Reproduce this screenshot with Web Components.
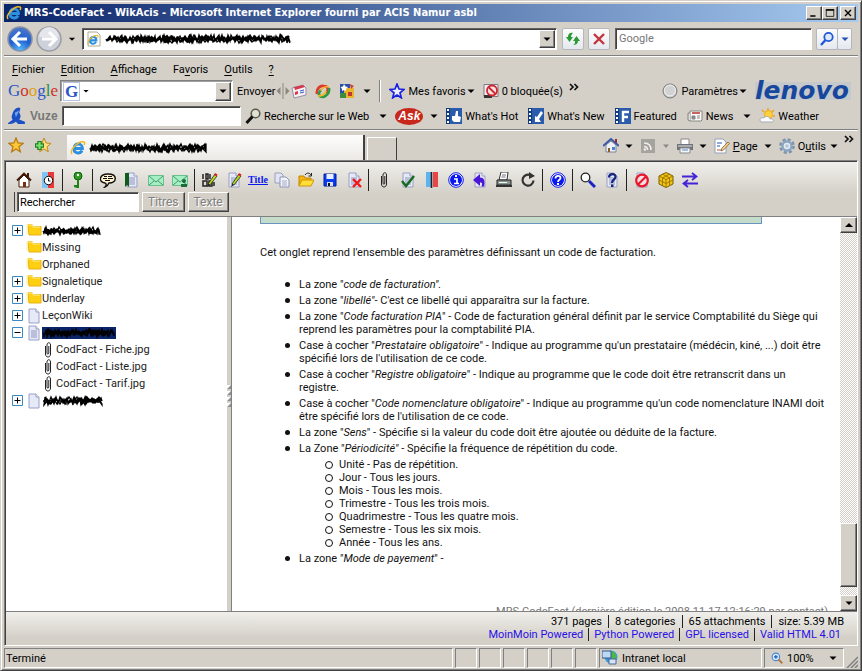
<!DOCTYPE html>
<html lang="fr">
<head>
<meta charset="utf-8">
<title>MRS-CodeFact - WikAcis</title>
<style>
html, body { height: 100%; }
body {
  margin: 0; overflow: hidden; background: #d4d0c8; color: #000;
  font: 11px/13px Roboto, "Noto Sans", sans-serif;
  --face: #d4d0c8; --link: #2a10e8;
}
</style>
</head>
<body>
<browser-window></browser-window>
<script>
const define = (name, css, html) => customElements.define(name, class extends HTMLElement {
  constructor() {
    super();
    this.attachShadow({ mode: 'open' }).innerHTML =
      `<style>:host,*{box-sizing:border-box}button{font:inherit;color:inherit;cursor:default}${css}</style>${html}`;
  }
});

const page = '<path d="M3 1h7l3 3v11H3z" fill="#e6e9f8" stroke="#9a9fc4"/><path d="M10 1v3h3" fill="#fff" stroke="#9599bb"/>';
const lines = '<path d="M5 6h6M5 8h6M5 10h6M5 12h6" stroke="#8d95bd"/>';
const pencil = '<path d="M6 12L13 2l2 2-7 9z" fill="#b8dc20" stroke="#222" stroke-width=".8"/><path d="M12 3l1-2 2.500 1.500-1 2z" fill="#e02020"/><path d="M5 15l1-3 2 1z" fill="#222"/>';
const ie = '<path d="M3 8.500h9.500c0-6-8-6-8.500 0-.3 5 6 6 8 2" fill="none" stroke="#2d8fe0" stroke-width="2.800"/><path d="M2 14C-1 10 9 0 14 2c1 .5.800 2 0 3" fill="none" stroke="#f0b826" stroke-width="1.500"/>';
const film = '<path d="M0 0h16v16H0z" fill="#2b5cab"/><path d="M0 0h4v16H0z" fill="#123a80"/><path d="M2 1v14" stroke="#fff" stroke-width="2" stroke-dasharray="2 2"/>';
const mail = '<path d="M.5 3.500h15v10H.5z" fill="#a4f0c4" stroke="#6cc08e"/><path d="M1 4l7 6 7-6M1 13l5-4M15 13l-5-4" fill="none" stroke="#3f8f62" stroke-width=".9"/>';
const star = 'M8 1l2 5 5 .4-4 3.400 1.300 5L8 12l-4.300 2.800 1.300-5-4-3.400L6 6z';
const clip = '<path d="M5.500 4v8c0 4 5 4 5 0V3c0-3-3.500-3-3.500 0v8c0 1.500 1.800 1.500 1.800 0V4" fill="none" stroke="#222"/>';
const ICONS = {
  ie,
  iepage: `<path d="M2 1h9l3 3v11H2z" fill="#fff" stroke="#b0a890"/><g transform="translate(1 3) scale(.75)">${ie}</g>`,
  down: '<path d="M4.500 6.500h7L8 10z" fill="#000"/>',
  downblue: '<path d="M4.500 6.500h7L8 10z" fill="#2050b0"/>',
  downgray: '<path d="M5 6.500h6L8 10z" fill="#8c8a84"/>',
  up: '<path d="M4 10h8L8 6z" fill="#000"/>',
  min: '<path d="M3 11h7v2H3z"/>',
  max: '<path d="M3 3.500h10v9H3z" fill="none" stroke="#000"/><path d="M2.500 3h11v2h-11z"/>',
  close: '<path d="M4 4l8 8M12 4l-8 8" stroke="#000" stroke-width="1.800"/>',
  refresh: '<path d="M1 6l3.500 5L8 6H6c0-2 1-3 2-4-3-1-5 1-5 4z" fill="#2b9a37"/><path d="M8 10l3.500-5L15 10h-2c0 2.500-2 4-5 4 2-1 2-2 2-4z" fill="#2b9a37"/>',
  stop: '<path d="M3 3l10 10M13 3L3 13" stroke="#c4343c" stroke-width="2.400"/>',
  lens: '<circle cx="9.500" cy="6" r="4.200" fill="#dbeafc" stroke="#2258d8" stroke-width="1.800"/><path d="M6.500 9L2 14" stroke="#2258d8" stroke-width="2.400"/>',
  mag: '<circle cx="10.500" cy="5.500" r="4.300" fill="#dfe3d6" stroke="#5c5c48" stroke-width="1.600"/><path d="M7.500 8.500L1.500 15" stroke="#111" stroke-width="3"/>',
  gmail: '<path d="M1 5l11-3 3 3v7L3 15z" fill="#f6f0f4" stroke="#9a8fa8"/><path d="M3 4l9-2 2 2-10 3z" fill="#d33a4a"/><path d="M4 9l3-1v3l-3 1z" fill="#d33a4a"/><path d="M9 8l4-1M9 10l4-1" stroke="#3858c8"/>',
  swirl: '<path d="M2 11c-1-5 3-9 7-8 4 0 5 4 2 7" fill="none" stroke="#dc3a2a" stroke-width="2.600"/><path d="M14 5c1 5-3 9-7 9-4-1-4-4-1-7" fill="none" stroke="#2b9c43" stroke-width="2.600"/><path d="M3 13c4 0 7-2 8-5" fill="none" stroke="#f4b52c" stroke-width="2"/><path d="M14 4c-4-1-7 1-8 4" fill="none" stroke="#f4b52c" stroke-width="1.500"/>',
  gadget: '<path d="M1 1h10v10H1z" fill="#2c50a8"/><path d="M5 5h10v10H5z" fill="#e8b52c"/><path d="M1 10h6v5H1z" fill="#3a8c42"/><path d="M9 9h4v4H9z" fill="#c03830"/><path d="M5 1l1.500 2.500L9 4 7 6v2L5 7 3 8V6L1.500 4 4 3.500z" fill="#fff"/><path d="M11 1l4 2-3 3z" fill="#d43a2c"/>',
  bluestar: `<path d="${star}" fill="#eef" stroke="#1a22e0" stroke-width="1.700"/>`,
  blocked: '<path d="M1 1.500h14v12H1z" fill="#f3eef0" stroke="#7e7884"/><path d="M1 12h8v3H1z" fill="#333"/><circle cx="9" cy="7.500" r="5" fill="#fbe3e3" stroke="#cf2630" stroke-width="1.800"/><path d="M5.500 4l7 7" stroke="#cf2630" stroke-width="1.800"/>',
  ball: '<circle cx="8" cy="8" r="7" fill="#c8c8c8" stroke="#77777a"/><circle cx="8" cy="7.500" r="5.500" fill="#d2d2d2" stroke="#f4f4f4"/>',
  frog: '<path d="M4 6c1-4 5-7 7-5l-1 4c2 3 1 5 0 6l5 2v2H9l-2-2c-2 2-5 2-7 2 0-2 3-2 4-4-1-1-1-3 0-5z" fill="#1d50c4"/><path d="M6 5l4-2-3 6z" fill="#6ea8f2"/>',
  hot: film + '<path d="M6 8l3 0 1-5 2 0v5l3 1-1 5H8L6 12z" fill="#fff"/>',
  newi: film + '<path d="M13 3L9 9l-2-1v6h6l-2-3 4-6z" fill="#fff"/>',
  feat: film + '<path d="M8 14V4h6M8 9h5" fill="none" stroke="#fff" stroke-width="2.400"/>',
  news: '<path d="M3 3h12v9l-1 1H3z" fill="#fafafa" stroke="#86867c"/><path d="M3 5H1v7l2 1" fill="#ddd" stroke="#86867c"/><path d="M5 5h8" stroke="#b53030" stroke-width="1.500"/><path d="M5 8h3v3H5zM10 8h3M10 10h3" fill="#888" stroke="#888"/>',
  sun: '<path d="M9 0v3M3 2l2 2M15 2l-2 2M16 8h-2" stroke="#f0a414" stroke-width="1.500"/><circle cx="9.500" cy="6.500" r="4" fill="#ffd23a" stroke="#eda820"/><path d="M2 14c-3-3 1-5 3-4 2-3 6-1 6 1 4-1 4 3 2 3z" fill="#fafcff" stroke="#a6acb4"/>',
  fav: `<path d="${star}" fill="#ffc637" stroke="#b87c12" stroke-width="1.300"/>`,
  addfav: `<path d="${star}" fill="#ffe07a" stroke="#c08a20" transform="translate(1 0)"/><path d="M0 8.500h9M4.500 4v9" stroke="#1f7f24" stroke-width="4.500"/><path d="M1 8.500h7M4.500 5v7" stroke="#7fe070" stroke-width="2.200"/>`,
  ehome: '<path d="M3 7v7h10V7L8 3z" fill="#eef2f8" stroke="#7c8494"/><path d="M0 8l8-7 8 7" fill="none" stroke="#3c58a8" stroke-width="2"/><path d="M12 1h2v4h-2z" fill="#8c3030"/><path d="M5 10h2v4H5z" fill="#8a5c28"/><path d="M9 9h3v3H9z" fill="#4a84d8"/>',
  rss: '<path d="M1 1h14v14H1z" fill="#a5a39d"/><path d="M4 5c5 0 7 3 7 7M4 8.500c2.500 0 3.500 1.500 3.500 3.500" fill="none" stroke="#eee" stroke-width="1.600"/><circle cx="4.800" cy="11.500" r="1.200" fill="#eee"/>',
  eprint: '<path d="M4 1h8v6H4z" fill="#fff" stroke="#888"/><path d="M0 6h16v6H0z" fill="#70737a"/><path d="M1 7h14v2H1z" fill="#a8abb0"/><path d="M3 10h10v5H3z" fill="#f4f6fa" stroke="#888"/><path d="M5 12h6" stroke="#5a8ac8"/>',
  epage: '<path d="M1 1h8l3 3v11H1z" fill="#fff" stroke="#96a0b4"/><path d="M3 5h5M3 8h3" stroke="#6a90d0" stroke-width="1.300"/><path d="M3 12h4" stroke="#d05040"/><path d="M7 13l1-3 6-6 1.500 1.500L9.500 12z" fill="#f4d088" stroke="#6c5830" stroke-width=".7"/>',
  gear: '<circle cx="8" cy="8" r="6.400" fill="none" stroke="#7f95ac" stroke-width="3" stroke-dasharray="3 2"/><circle cx="8" cy="8" r="4.500" fill="#e4ecf2" stroke="#8aa6c2" stroke-width="2.400"/><circle cx="8" cy="8" r="1.800" fill="#b4c4d4"/>',
  home: '<path d="M3 8v7h10V8L8 3z" fill="#fff" stroke="#421a0a"/><path d="M1 8.500l7-7 7 7" fill="none" stroke="#421a0a" stroke-width="1.800"/><path d="M11 1h2v4h-2z" fill="#421a0a"/><path d="M7 10h3v5H7z" fill="#7a3010"/>',
  clock: '<path d="M2 0h6v16H2z" fill="#7fc4f4"/><path d="M8 0h6v16H8z" fill="#e83838"/><circle cx="8.500" cy="8.500" r="4.200" fill="#fff" stroke="#111"/><path d="M8.500 6v3h2" fill="none" stroke="#111"/>',
  key: '<circle cx="8" cy="4" r="4" fill="#2c9a20" stroke="#12600c"/><circle cx="8" cy="3" r="1.200" fill="#fff"/><path d="M7 8h2v8H7l-3-1v-2h3z" fill="#1c8414"/>',
  bubble: '<path d="M8 2c10 0 9 9 1 9-1 0 0 3-4 4 2-2 1-4 0-4C-2 10-1 2 8 2z" fill="#fff3d0" stroke="#111" stroke-width="1.500"/><path d="M4 4.500h3M8 4.500h4M3 6.500h4M8 6.500h5M5 8.500h5" stroke="#111"/>',
  book: page + lines + '<path d="M1 1h4v14l-2-2-2 2z" fill="#0f5a1c"/>',
  mail, mailuser: mail + '<circle cx="12" cy="9" r="2" fill="#1f6a3c"/><path d="M9 15v-3h6v3z" fill="#1f6a3c"/>',
  editgui: '<path d="M1 2v5M4 2h2v5H4zM8 2v5M1 9h4v5H1zM7 9h3v5H7zM12 10v4" fill="none" stroke="#222" stroke-width="1.500"/>' + pencil,
  edit: page + lines + pencil,
  copy: '<path d="M1 1h6l2 2v8H1z" fill="#e2e5f5" stroke="#999ebd"/><path d="M6 5h6l3 3v7H6z" fill="#f2f3fb" stroke="#8f94b5"/><path d="M8 9h5M8 11h5M8 13h5" stroke="#a5aac8"/>',
  open: '<path d="M1 14V4h5l1 2h6v3" fill="#f5b50c" stroke="#c08404"/><path d="M1 14l3-6h12l-3 6z" fill="#ffdf38" stroke="#d09408"/><path d="M7 3c2-3 5-2 6 0M13.500 1v3h-3" fill="none" stroke="#222"/>',
  disk: '<path d="M2 2h12v12H2z" fill="#0a3cf0" stroke="#031f96"/><path d="M4.500 2h7v5h-7z" fill="#e6f0ff"/><path d="M5 10h6v4H5z" fill="#dcdcec"/><path d="M6 11h2v3H6z" fill="#111"/>',
  del: page + lines + '<path d="M7 7l8 8M15 7l-8 8" stroke="#f01818" stroke-width="2.400"/>',
  clip,
  check: page + lines + '<path d="M2 9l4 5 8-10" fill="none" stroke="#156a1c" stroke-width="2.400"/>',
  diff: '<path d="M2 0h5v15H2z" fill="#5cb4ee"/><path d="M9 0h5v15H9z" fill="#e84646"/><path d="M7.500 0v16" stroke="#222" stroke-width="1.600"/>',
  info: '<circle cx="8" cy="8" r="7.300" fill="#fff" stroke="#0a18e8"/><circle cx="8" cy="8" r="6" fill="#0a18f0"/><path d="M6 7h3v4M6 11.500h5" fill="none" stroke="#fff" stroke-width="1.700"/><path d="M7 3h2v2H7z" fill="#fff"/>',
  back: page + '<path d="M1 8l7-6v3.500c5 0 5 5 4 9h-2.500c1-3 1-4-1.500-4V14z" fill="#4a16d8"/>',
  print: '<path d="M5 0h7l-1 8H3z" fill="#fff" stroke="#333"/><path d="M6 3h4M5.500 5h4" stroke="#777"/><path d="M1 8h14v5H1z" fill="#8c9290" stroke="#222"/><path d="M0 13h16v2H0z" fill="#333"/><path d="M3 10.500h8" stroke="#dfe"/>',
  reload: '<path d="M11 3.500A5.500 5.500 0 1 0 13.500 8.500" fill="none" stroke="#333" stroke-width="2.200"/><path d="M9 0l6 4-6 3z" fill="#333"/>',
  help: '<circle cx="8" cy="8" r="7.300" fill="#fff" stroke="#0a18e8"/><circle cx="8" cy="8" r="6" fill="#0a18f0"/><path d="M5.500 6.500c0-3.500 5-3.500 5-.5 0 2-2.500 1.500-2.500 4" fill="none" stroke="#fff" stroke-width="1.800"/><path d="M7 11h2v2H7z" fill="#fff"/>',
  find: '<circle cx="5.500" cy="5.500" r="4.300" fill="#fff" stroke="#222" stroke-width="1.300"/><path d="M9 9l6 6" stroke="#1a22c8" stroke-width="3"/>',
  pagehelp: page + lines + '<path d="M5 5.500C5 1 12 1 11.500 5 11.500 8 8 7 8 11" fill="none" stroke="#13277c" stroke-width="2.200"/><path d="M7 12.500h2.500V15H7z" fill="#13277c"/>',
  no: page + '<circle cx="8" cy="8.500" r="5.800" fill="#f4dfe6" stroke="#e81828" stroke-width="2.200"/><path d="M12 4.500l-8 8" stroke="#e81828" stroke-width="2.200"/>',
  box: '<path d="M8 .5l7 3.500v8l-7 3.500L1 12V4z" fill="#f2c414" stroke="#7c5c04"/><path d="M1 4l7 3.500L15 4M8 7.500v8M4.500 2l7 4v8M11.500 2l-7 4v8M1 8l7 3.500L15 8" fill="none" stroke="#9a7408" stroke-width=".9"/>',
  swap: '<path d="M0 4.500h14M10 1l4.500 3.500L10 8M16 11.500H2M6 8l-4.500 3.500L6 15" fill="none" stroke="#4422d8" stroke-width="1.800"/>',
  folder: '<path d="M2 1.500h4l1 2h8V12H3z" fill="#ffd012" stroke="#eab010"/><path d="M1 11V2h5l1 2h7" fill="none" stroke="#fff090"/>',
  page, pagelines: page + lines,
  plus: '<path d="M3.500 2.500h10v10h-10z" fill="#fff" stroke="#3a8ac4"/><path d="M5.500 7.500h6M8.500 4.500v6" stroke="#000"/>',
  minus: '<path d="M3.500 2.500h10v10h-10z" fill="#fff" stroke="#3a8ac4"/><path d="M5.500 7.500h6" stroke="#000"/>',
  globe: '<circle cx="9" cy="7" r="6.500" fill="#3a9ad8"/><path d="M8 1c4 0 6 3 7 6l-4 4-2-4z" fill="#4cb848"/><path d="M0 1h9v7H0z" fill="#bcd8f4" stroke="#34568c"/><path d="M7 9h7v5H7z" fill="#d4e4f6" stroke="#486898"/>',
  zoom: '<circle cx="6.500" cy="6.500" r="5" fill="#d4e8fc" stroke="#4a86d0" stroke-width="1.500"/><path d="M4 6.500h5M6.500 4v5" stroke="#1c58b0" stroke-width="1.500"/><path d="M10 10l5 5" stroke="#b07838" stroke-width="2.400"/>',
  more: '<path d="M3 4l3 3-3 3M7.500 4l3 3-3 3" fill="none" stroke="#111" stroke-width="1.700"/>',
  arrows: '<path d="M5.500 4v8L1.500 8zM10.500 4v8l4-4z" fill="#8c8880"/><path d="M8 0v16" stroke="#8c8880"/>'
};
customElements.define('ui-icon', class extends HTMLElement {
  constructor() { super(); this.attachShadow({ mode: 'open' }); }
  connectedCallback() {
    this.shadowRoot.innerHTML = `<style>:host{display:block;flex:none;width:16px;height:16px}svg{display:block;width:100%;height:100%}</style>
      <svg viewBox="0 0 16 16" aria-hidden="true">${ICONS[this.getAttribute('name')] || ''}</svg>`;
  }
});

/* Ink scrawl that hides a name */
customElements.define('ink-scrawl', class extends HTMLElement {
  connectedCallback() {
    const w = +this.getAttribute('length');
    let seed = w * 7919, d = 'M1 6';
    const rnd = () => (seed = (seed * 1103515245 + 12345) % 2147483648) / 2147483648;
    for (let pass = 0; pass < 5; pass++)
      for (let x = 2, k = 0; x < w - 1; x += 1 + Math.round(rnd() * 3), k++)
        d += `L${pass & 1 ? w - x : x} ${(k & 1 ? 2 : 6) + Math.round(rnd() * 4)}`;
    this.attachShadow({ mode: 'open' }).innerHTML =
      `<style>:host{display:block;flex:none}svg{display:block}</style>
       <svg width="${w}" height="12" aria-hidden="true"><path d="${d}" fill="none" stroke="#000" stroke-width="1.300"/></svg>`;
  }
});

define('flat-button', `
  :host{display:block;flex:none}
  button{display:flex;align-items:center;gap:3px;border:0;background:none;padding:0;margin:0;white-space:nowrap}`,
  '<button type="button"><slot></slot></button>');

define('raised-button', `
  :host{display:block;flex:none;width:16px;height:16px}
  button{display:flex;align-items:center;justify-content:center;width:100%;height:100%;padding:0;background:var(--face);
    border:1px solid;border-color:#fff #404040 #404040 #fff;box-shadow:inset -1px -1px #808080;overflow:hidden}`,
  '<button type="button" aria-label="Bouton"><slot></slot></button>');

define('glass-button', `
  :host{display:block;flex:none;height:22px;width:22px}
  button{display:flex;align-items:center;justify-content:center;width:100%;height:100%;padding:0;
    border:1px solid #b4b8be;border-radius:2px;background:linear-gradient(#fdfdfd,#e4e8ee);overflow:hidden}`,
  '<button type="button" aria-label="Bouton"><slot></slot></button>');

define('tool-sep', `
  :host{display:block;flex:none;width:2px;height:22px;border-left:1px solid #808080;border-right:1px solid #fff}`, '');

define('title-bar', `
  :host{display:flex;align-items:center;height:18px;padding:0 2px;gap:2px;color:#fff;
    background:linear-gradient(90deg,#0a246a,#a6caf0);font:bold 11px/18px "DejaVu Sans Condensed","Noto Sans",sans-serif}
  h1{font:inherit;margin:0;flex:1;white-space:nowrap;overflow:hidden}
  .buttons{display:flex}
  raised-button{height:14px}
  raised-button:last-child{margin-left:2px}
  ui-icon{width:12px;height:12px}
  ui-icon.logo{width:16px;height:16px}`,
  `<ui-icon class="logo" name="ie"></ui-icon><h1>MRS-CodeFact - WikAcis - Microsoft Internet Explorer fourni par ACIS Namur asbl</h1>
   <div class="buttons"><raised-button><ui-icon name="min"></ui-icon></raised-button><raised-button><ui-icon name="max"></ui-icon></raised-button><raised-button><ui-icon name="close"></ui-icon></raised-button></div>`);

define('address-bar', `
  :host{display:flex;align-items:center;height:34px;padding:0 6px 0 3px;border-bottom:1px solid #808080;box-shadow:0 1px #fff}
  .travel{display:flex;align-items:center;gap:3px;margin-right:3px}
  .travel ui-icon{width:14px}
  .travel button{border:0;background:none;padding:0;display:block}
  .travel svg{display:block;width:26px;height:26px}
  .field{display:flex;align-items:center;background:#fff;border:1px solid;border-color:#606060 #fff #fff #606060;box-shadow:inset 1px 1px #404040;height:22px;padding:1px 1px 1px 3px}
  .url{flex:1;gap:3px;margin-right:5px}
  .url raised-button{height:18px;margin-left:auto}
  input{width:100%;border:0;outline:0;background:none;font:inherit;padding:0;color:#000}
  input::placeholder{color:#777;opacity:1}
  .search{width:197px;margin:0 4px 0 5px}
  glass-button + glass-button{margin-left:4px}
  glass-button.drop{width:15px;margin-left:-1px}
  glass-button.go{margin-left:0}`,
  `<div class="travel">
     <button type="button" aria-label="Précédent"><svg viewBox="0 0 26 26"><defs><radialGradient id="b" cx=".5" cy="1" r="1"><stop offset="0" stop-color="#5cc0ff"/><stop offset=".5" stop-color="#1f5fd0"/><stop offset="1" stop-color="#4f78c8"/></radialGradient></defs><circle cx="13" cy="13" r="12" fill="url(#b)" stroke="#8890a4" stroke-width="1.500"/><path d="M13 6l-7 7 7 7M7 13h13" fill="none" stroke="#fff" stroke-width="3"/></svg></button>
     <button type="button" aria-label="Suivant"><svg viewBox="0 0 26 26"><circle cx="13" cy="13" r="12" fill="#cdd1da" stroke="#9a9da6" stroke-width="1.500"/><path d="M3 11a10 10 0 0 1 20 0z" fill="#e4e6ec"/><path d="M13 6l7 7-7 7M19 13H6" fill="none" stroke="#fff" stroke-width="3"/></svg></button>
     <ui-icon name="down"></ui-icon>
   </div>
   <div class="field url"><ui-icon name="iepage"></ui-icon><ink-scrawl length="187"></ink-scrawl><raised-button><ui-icon name="down"></ui-icon></raised-button></div>
   <glass-button><ui-icon name="refresh"></ui-icon></glass-button><glass-button><ui-icon name="stop"></ui-icon></glass-button>
   <div class="field search"><input type="text" placeholder="Google" aria-label="Google"></div>
   <glass-button class="go"><ui-icon name="lens"></ui-icon></glass-button><glass-button class="drop"><ui-icon name="downblue"></ui-icon></glass-button>`);

define('menu-bar', `
  :host{display:flex;align-items:center;gap:16px;height:23px;padding:4px 8px 0}
  u{text-underline-offset:2px}`,
  ['<u>F</u>ichier', '<u>E</u>dition', '<u>A</u>ffichage', 'Fa<u>v</u>oris', '<u>O</u>utils', '<u>?</u>']
    .map(t => `<flat-button><span>${t}</span></flat-button>`).join(''));

define('google-bar', `
  :host{display:flex;align-items:center;height:24px;padding:0 7px 0 4px}
  .logo{font:17px/24px "Liberation Serif",serif;width:52px;white-space:nowrap}
  .b{color:#2a56c6}.r{color:#d0302c}.y{color:#e0a010}.n{color:#2a9038}
  .combo{display:flex;align-items:center;width:173px;height:22px;background:#fff;border:1px solid;border-color:#808080 #fff #fff #808080;box-shadow:inset 1px 1px #a0a0a0;padding:1px}
  .g{font:bold 17px/17px "Liberation Serif",serif;color:#2a56c6;border:1px solid #b8c4dc;width:17px;text-align:center;margin-left:1px}
  .combo input{flex:1;min-width:0;border:0;outline:0;background:none}
  .combo raised-button{height:19px}
  .combo > ui-icon{width:12px}
  .icons{display:flex;gap:8px;margin:0 4px 0 0}
  .send{margin-left:4px}
  .end{margin-left:auto}
  .tail{margin:0 4px 0 -3px}
  .more{margin:-6px 0 0 4px}
  .brand{font:italic bold 25px/18px "DejaVu Sans",sans-serif;color:#17479c;background:#c5c9cc;width:96px;height:18px}
  tool-sep{margin:0 8px 0 4px}`,
  `<span class="logo"><span class="b">G</span><span class="r">o</span><span class="y">o</span><span class="b">g</span><span class="n">l</span><span class="r">e</span></span>
   <span class="combo"><span class="g">G</span><ui-icon name="down"></ui-icon><input type="text" aria-label="Recherche Google"><raised-button><ui-icon name="down"></ui-icon></raised-button></span>
   <flat-button class="send">Envoyer</flat-button><ui-icon name="arrows"></ui-icon>
   <span class="icons"><ui-icon name="gmail"></ui-icon><ui-icon name="swirl"></ui-icon><ui-icon name="gadget"></ui-icon></span>
   <ui-icon name="down"></ui-icon><tool-sep></tool-sep>
   <flat-button><ui-icon name="bluestar"></ui-icon><span>Mes favoris</span></flat-button><ui-icon name="down" class="tail"></ui-icon>
   <flat-button><ui-icon name="blocked"></ui-icon><span>0 bloquée(s)</span></flat-button><ui-icon name="more" class="more"></ui-icon>
   <flat-button class="end"><ui-icon name="ball"></ui-icon><span>Paramètres</span></flat-button><ui-icon name="down" class="tail"></ui-icon>
   <span class="brand">lenovo</span>`);

define('vuze-bar', `
  :host{display:flex;align-items:center;height:27px;padding:0 4px;border-bottom:1px solid #808080;box-shadow:0 1px #fff;white-space:nowrap}
  .logo{display:flex;align-items:center;gap:4px;width:54px;font:bold 12px/16px "Liberation Sans",sans-serif;color:#777}
  .logo ui-icon{width:18px;height:18px}
  input{width:179px;height:20px;background:#fff;border:1px solid;border-color:#606060 #fff #fff #606060;box-shadow:inset 1px 1px #404040;outline:0;margin:0 4px 0 0}
  .ask{font:italic bold 12px/16px "Liberation Sans",sans-serif;color:#fff;background:#c8281c;border-radius:50%;width:28px;height:17px;text-align:center;margin:0 3px 0 4px}
  .drop{margin-left:6px}
  .item{margin-left:10px}
  .near{margin-left:4px}`,
  `<span class="logo"><ui-icon name="frog"></ui-icon>Vuze</span><input type="text" aria-label="Recherche Vuze">
   <flat-button><ui-icon name="mag"></ui-icon><span>Recherche sur le Web</span></flat-button><ui-icon class="drop" name="down"></ui-icon>
   <span class="ask">Ask</span><ui-icon name="down"></ui-icon>
   <flat-button class="near"><ui-icon name="hot"></ui-icon><span>What's Hot</span></flat-button>
   <flat-button class="item"><ui-icon name="newi"></ui-icon><span>What's New</span></flat-button>
   <flat-button class="item"><ui-icon name="feat"></ui-icon><span>Featured</span></flat-button>
   <flat-button class="item"><ui-icon name="news"></ui-icon><span>News</span></flat-button><ui-icon class="drop" name="down"></ui-icon>
   <flat-button class="near"><ui-icon name="sun"></ui-icon><span>Weather</span></flat-button>`);

define('tab-strip', `
  :host{display:flex;align-items:flex-end;height:30px;padding:0 0 0 4px}
  .fav{display:flex;gap:11px;align-self:center;width:59px}
  .tab{display:flex;align-items:center;gap:3px;width:298px;height:25px;padding:0 3px;border-right:2px solid #404040;background:linear-gradient(#fdfdfc,#eceae6)}
  .new{width:30px;height:23px;margin-left:2px;border:1px solid #fff;border-width:1px 0 0 1px;border-right:1px solid #404040}
  .cmd{display:flex;align-items:center;margin-left:auto;height:28px}
  .cmd .drop{margin:0 3px 0 2px}
  .more{align-self:flex-start}`,
  `<span class="fav"><ui-icon name="fav"></ui-icon><ui-icon name="addfav"></ui-icon></span>
   <span class="tab"><ui-icon name="ie"></ui-icon><ink-scrawl length="119"></ink-scrawl></span><span class="new"></span>
   <span class="cmd"><ui-icon name="ehome"></ui-icon><ui-icon class="drop" name="down"></ui-icon>
   <ui-icon name="rss"></ui-icon><ui-icon class="drop" name="downgray"></ui-icon>
   <ui-icon name="eprint"></ui-icon><ui-icon class="drop" name="down"></ui-icon>
   <flat-button><ui-icon name="epage"></ui-icon><span><u>P</u>age</span></flat-button><ui-icon class="drop" name="down"></ui-icon>
   <flat-button><ui-icon name="gear"></ui-icon><span>O<u>u</u>tils</span></flat-button><ui-icon name="down"></ui-icon>
   <ui-icon class="more" name="more"></ui-icon></span>`);

define('wiki-toolbar', `
  :host{display:block;background:linear-gradient(#f0efeb,#d4d0c8 32px);padding:6px 6px 4px;border-bottom:1px solid #808080}
  .icons{display:flex;align-items:center;height:24px}
  .cell{display:flex;justify-content:center;width:24px}
  .sep{width:6px;height:22px}
  .sep::before{content:"";display:block;width:1px;height:22px;margin-left:2px;background:#222}
  .title{font:bold 10px/16px "Liberation Serif",serif;color:#0a18f0;text-decoration:underline}
  form{display:flex;gap:3px;height:20px;padding-left:2px;border-left:1px solid #404040;margin:0 2px;font-size:12px}
  input{width:122px;height:20px;font:inherit;font-size:11px;padding:0 2px;background:#fff;border:1px solid;border-color:#606060 #fff #fff #606060;box-shadow:inset 1px 1px #404040;outline:0}
  form button{height:20px;padding:0 5px;color:#808080;text-shadow:1px 1px #fff;background:var(--face);border:1px solid;border-color:#fff #404040 #404040 #fff;box-shadow:inset -1px -1px #808080}`,
  '<div class="icons">' + 'home clock | key | bubble book mail mailuser | editgui edit T copy open disk del | clip check diff info back print reload | help | find pagehelp | no box swap'
    .split(' ').map(n => n === '|' ? '<span class="sep"></span>' : `<span class="cell">${n === 'T' ? '<span class="title">Title</span>' : `<ui-icon name="${n}"></ui-icon>`}</span>`).join('') + '</div>' +
  `<form><input type="text" value="Rechercher" aria-label="Rechercher"><button type="button" disabled>Titres</button><button type="button" disabled>Texte</button></form>`);

define('tree-item', `
  :host{display:flex;align-items:center;height:17px;white-space:nowrap;color:#222}
  .t{width:17px;flex:none}`,
  '<span class="t"><slot name="toggle"></slot></span><slot></slot>');

define('page-tree', `
  :host{display:block;overflow:hidden;background:#fff;padding:5px 0 0 3px}
  .child{padding-left:14px}
  .sel{background:#0a246a}`,
  [['plus','folder',60],['','folder','Missing'],['','folder','Orphaned'],['plus','folder','Signaletique'],['plus','folder','Underlay'],['plus','page','LeçonWiki'],['minus','pagelines',74,'sel'],
   ['c','clip','CodFact - Fiche.jpg'],['c','clip','CodFact - Liste.jpg'],['c','clip','CodFact - Tarif.jpg'],['plus','page',62]]
  .map(([t, i, l, c]) => `<tree-item class="${t === 'c' ? 'child' : ''}">${t && t !== 'c' ? `<ui-icon slot="toggle" name="${t}"></ui-icon>` : ''}<ui-icon name="${i}"></ui-icon>${
    typeof l === 'number' ? `<ink-scrawl class="${c || ''}" length="${l}"></ink-scrawl>` : `<span>${l}</span>`}</tree-item>`).join(''));

define('pane-splitter', `
  :host{display:flex;flex-direction:column;width:5px;background:#d4d0c8;border-right:1px solid #808080;padding-top:168px;overflow:hidden}
  i{display:block;height:4px;margin-bottom:2px;background:linear-gradient(135deg,#fff 40%,#909090 60%)}`,
  '<i></i><i></i><i></i><i></i>');

define('scroll-bar', `
  :host{display:flex;flex-direction:column;width:17px;background:repeating-conic-gradient(#fff 0 25%,#d4d0c8 0 50%) 0 0/2px 2px}
  .space{flex:1}
  .thumb{height:64px;background:var(--face);border:1px solid;border-color:#fff #404040 #404040 #fff;box-shadow:inset -1px -1px #808080;margin-bottom:8px}
  raised-button{width:17px}`,
  '<raised-button><ui-icon name="up"></ui-icon></raised-button><div class="space"></div><div class="thumb"></div><raised-button><ui-icon name="down"></ui-icon></raised-button>');

define('wiki-page', `
  :host{display:block;background:#fff;overflow:hidden;padding:0 12px 0 28px;color:#111}
  .table-end{height:7px;margin-right:66px;background:#c5dccb;border:1px solid #6a94c0;border-top:0}
  p{margin:22px 0 19px}
  ul{margin:0;padding:0 0 0 39px;list-style:none}
  li{margin-top:3px;position:relative}
  li::before{content:"";position:absolute;left:-14px;top:4px;width:5px;height:5px;border-radius:50%;background:#111}
  ul ul{padding-left:40px;margin-top:3px}
  ul ul li{margin:0}
  ul ul li::before{background:none;border:1px solid #111;left:-14px;top:3px;width:6px;height:6px}
  .edited{margin:40px 0 0;text-align:right;color:#777;white-space:nowrap}`,
  `<div class="table-end"></div>
   <p>Cet onglet reprend l'ensemble des paramètres définissant un code de facturation.</p>
   <ul>
    <li>La zone "<em>code de facturation".</em></li>
    <li>La zone "<em>libellé"</em>- C'est ce libellé qui apparaîtra sur la facture.</li>
    <li>La zone "<em>Code facturation PIA</em>" - Code de facturation général définit par le service Comptabilité du Siège qui reprend les paramètres pour la comptabilité PIA.</li>
    <li>Case à cocher "<em>Prestataire obligatoire</em>" - Indique au programme qu'un prestataire (médécin, kiné, ...) doit être spécifié lors de l'utilisation de ce code.</li>
    <li>Case à cocher "<em>Registre obligatoire</em>" - Indique au programme que le code doit être retranscrit dans un registre.</li>
    <li>Case à cocher "<em>Code nomenclature obligatoire</em>" - Indique au programme qu'un code nomenclature INAMI doit être spécifié lors de l'utilisation de ce code.</li>
    <li>La zone "<em>Sens</em>" - Spécifie si la valeur du code doit être ajoutée ou déduite de la facture.</li>
    <li>La Zone "<em>Périodicité"</em> - Spécifie la fréquence de répétition du code.
     <ul><li>Unité - Pas de répétition.</li><li>Jour - Tous les jours.</li><li>Mois - Tous les mois.</li><li>Trimestre - Tous les trois mois.</li><li>Quadrimestre - Tous les quatre mois.</li><li>Semestre - Tous les six mois.</li><li>Année - Tous les ans.</li></ul></li>
    <li>La zone "<em>Mode de payement</em>" -</li>
   </ul>
   <p class="edited">MRS-CodeFact (dernière édition le 2008-11-17 12:16:29 par contact)</p>`);

define('wiki-footer', `
  :host{display:block;height:34px;padding:3px 13px 0;text-align:right;background:linear-gradient(#f0efeb,#d4d0c8 26px);border-top:1px solid #808080}
  div{display:flex;justify-content:flex-end}
  div > *{padding:0 6px;border-left:1px solid #222;white-space:nowrap}
  div > :first-child{border:0}
  div > :last-child{padding-right:0}
  .links{padding-right:3px}
  .links > *{padding:0 5px}
  a{color:var(--link);text-decoration:none}`,
  `<div><span>371 pages</span><span>8 categories</span><span>65 attachments</span><span>size: 5.39 MB</span></div>
   <div class="links"><a href="#moin">MoinMoin Powered</a><a href="#python">Python Powered</a><a href="#gpl">GPL licensed</a><a href="#html">Valid HTML 4.01</a></div>`);

define('status-bar', `
  :host{display:flex;gap:2px;height:20px;white-space:nowrap}
  .p{display:flex;align-items:center;gap:4px;width:22px;border:1px solid;border-color:#808080 #fff #fff #808080;padding:0 2px}
  .grow{flex:1;padding:0 1px}
  .zone{width:163px}
  .zoom{width:80px;padding-left:6px}
  .zoom .glass{width:12px;height:12px}
  .zoom ui-icon:last-child{margin-left:auto}
  svg{width:12px;height:14px;align-self:flex-end}`,
  `<span class="p grow">Terminé</span><span class="p"></span><span class="p"></span><span class="p"></span><span class="p"></span><span class="p"></span><span class="p"></span>
   <span class="p zone"><ui-icon name="globe"></ui-icon>Intranet local</span>
   <span class="p zoom"><ui-icon class="glass" name="zoom"></ui-icon>100%<ui-icon name="down"></ui-icon></span>
   <svg viewBox="0 0 12 14" aria-hidden="true"><path d="M1 14L12 3M5 14l7-7M9 14l3-3" stroke="#808080" stroke-width="1.500"/></svg>`);

define('browser-window', `
  :host{display:flex;flex-direction:column;height:100vh;padding:3px 3px 2px 3px;border:1px solid;border-color:#d4d0c8 #404040 #404040 #d4d0c8;box-shadow:inset 1px 1px #fff,inset -1px -1px #808080;background:var(--face)}
  .client{display:flex;flex-direction:column;flex:1;min-height:0;border:1px solid #808080;border-bottom-color:#fff;border-right-color:#fff;box-shadow:inset 1px 1px #404040;padding:1px 0 0 1px;margin-bottom:2px}
  .panes{display:flex;flex:1;min-height:0}
  page-tree{width:221px;flex:none}
  wiki-page{flex:1;min-width:0}
  title-bar,address-bar,menu-bar,google-bar,vuze-bar,tab-strip,status-bar,wiki-toolbar,wiki-footer,pane-splitter,scroll-bar{flex:none}`,
  `<title-bar></title-bar><address-bar></address-bar><menu-bar></menu-bar><google-bar></google-bar><vuze-bar></vuze-bar><tab-strip></tab-strip>
   <div class="client"><wiki-toolbar></wiki-toolbar>
    <div class="panes"><page-tree></page-tree><pane-splitter></pane-splitter><wiki-page></wiki-page><scroll-bar></scroll-bar></div>
    <wiki-footer></wiki-footer></div>
   <status-bar></status-bar>`);
</script>
</body>
</html>
